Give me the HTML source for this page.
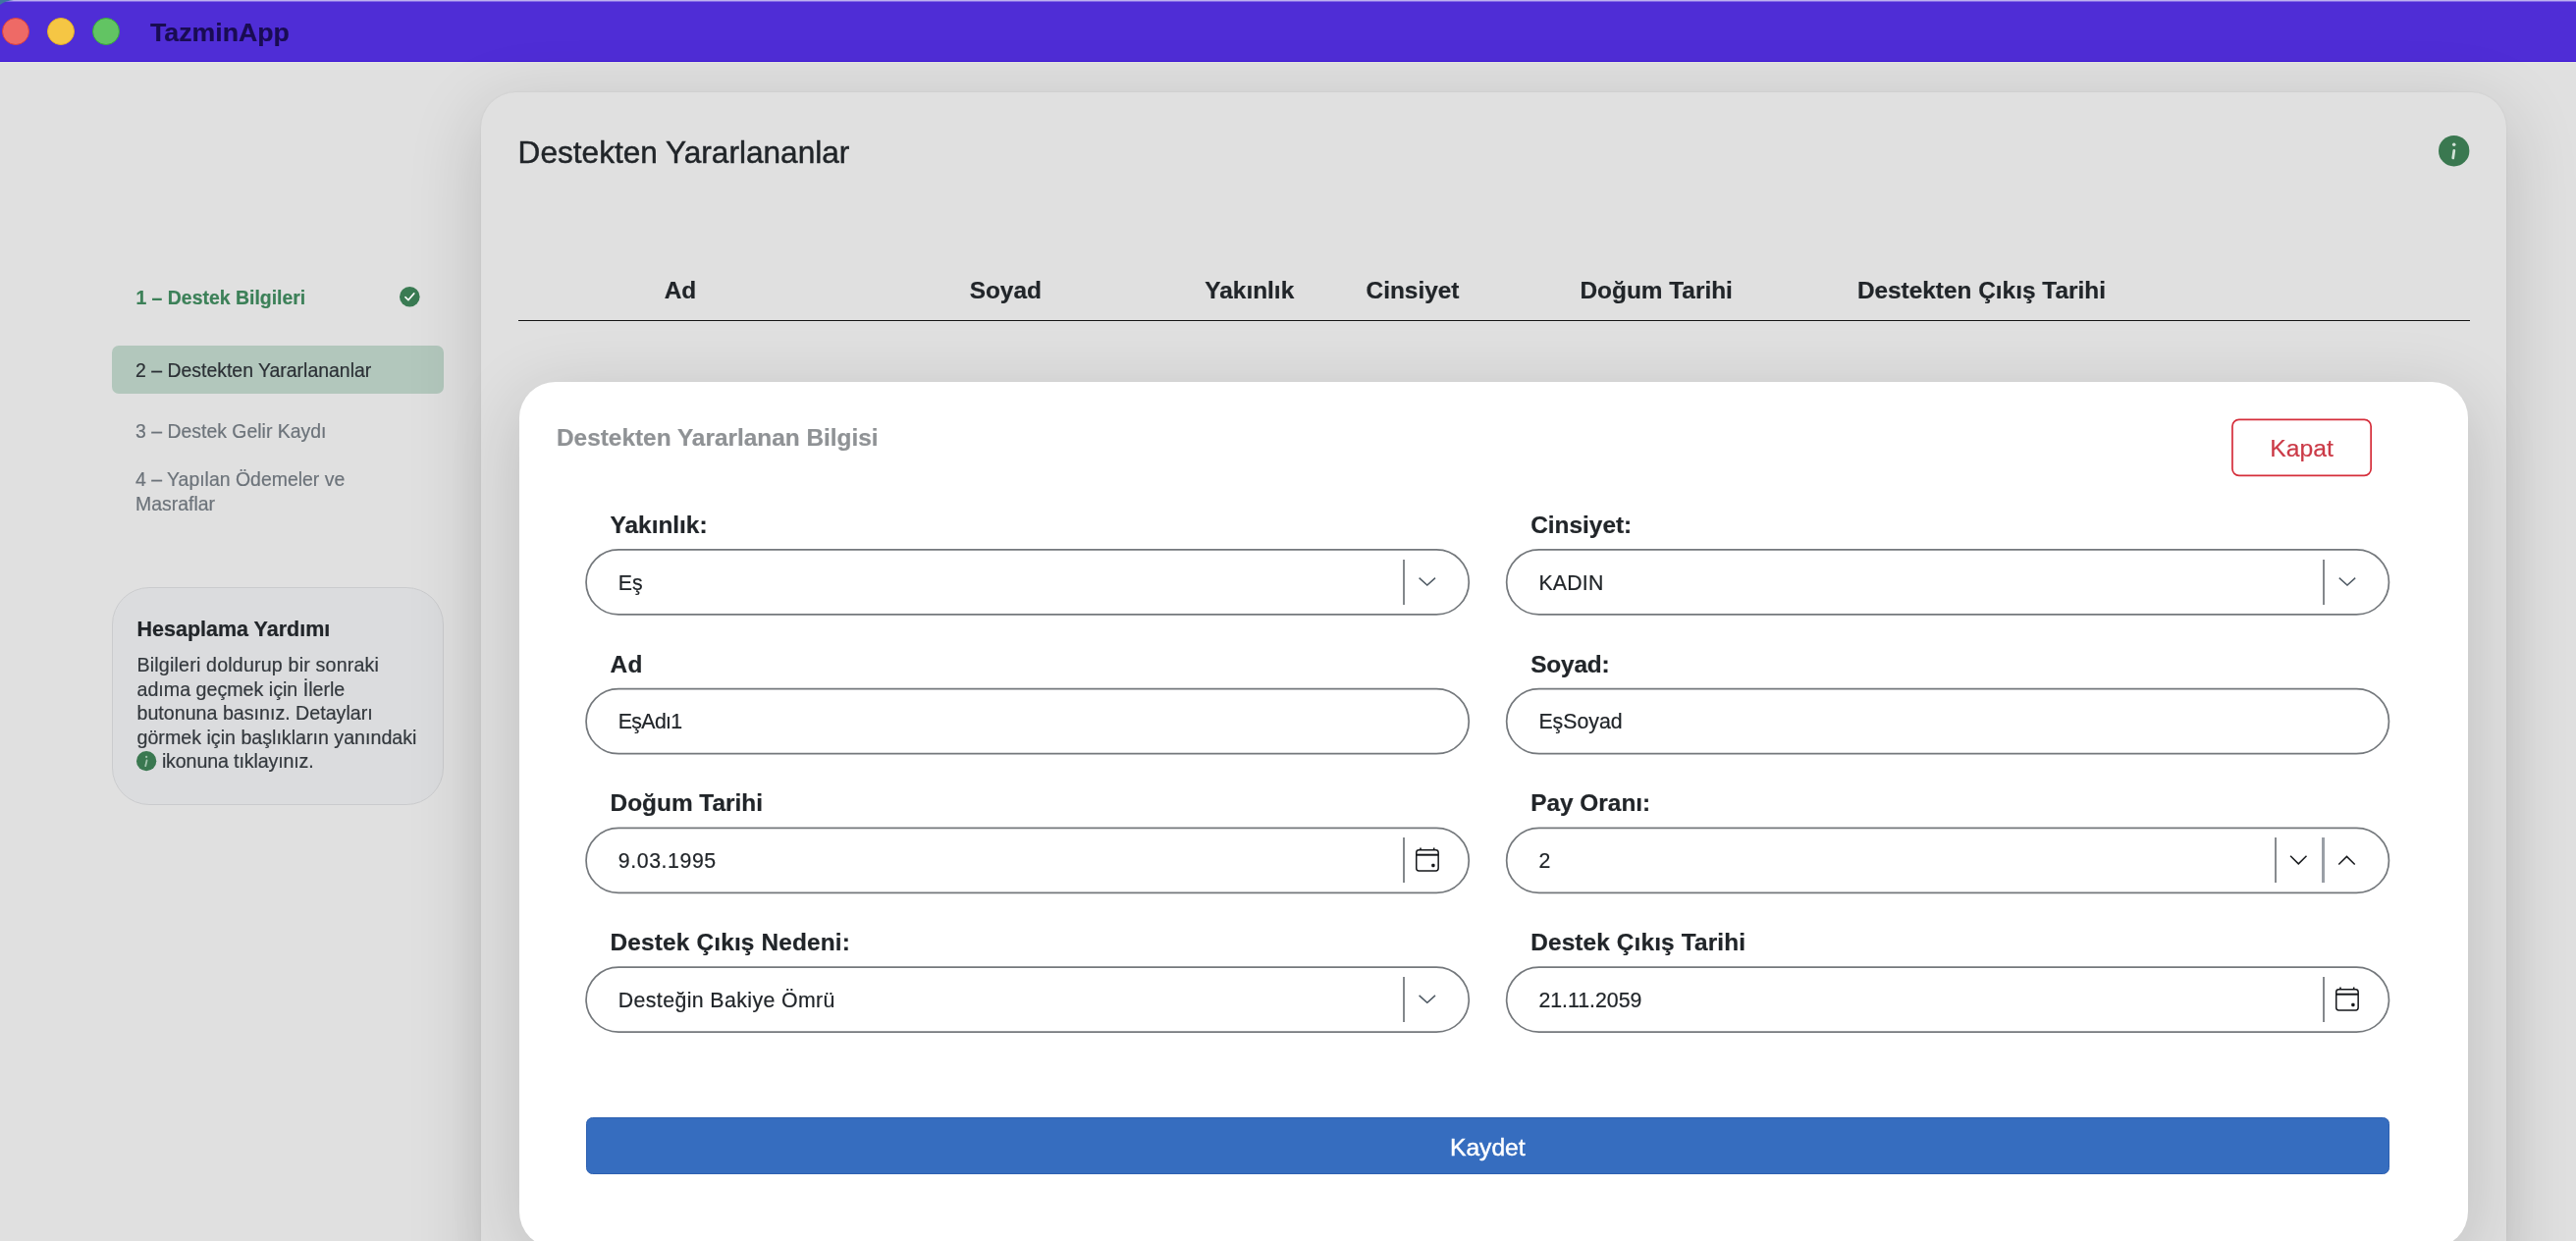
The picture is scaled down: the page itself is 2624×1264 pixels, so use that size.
<!DOCTYPE html>
<html lang="tr"><head><meta charset="utf-8"><title>TazminApp</title>
<style>
html,body{margin:0;padding:0;}
body{width:2624px;height:1264px;overflow:hidden;position:relative;background:#e0e0e0;font-family:"Liberation Sans",sans-serif;}
#root{position:absolute;left:0;top:0;width:2624px;height:1264px;overflow:hidden;will-change:transform;}
.t{position:absolute;white-space:nowrap;line-height:1;-webkit-text-stroke:0.2px currentColor;}
.abs{position:absolute;}
.inp{position:absolute;box-sizing:border-box;border:1.8px solid #777b7f;border-radius:34px;background:#fff;}
.sep{position:absolute;background:#84888c;}
svg{position:absolute;overflow:visible;}
</style></head><body><div id="root">
<div class="abs" style="left:0;top:0;width:2624px;height:63px;background:#4f2dd6;"></div>
<div class="abs" style="left:0;top:0;width:2624px;height:1px;background:#bdb2ee;"></div>
<div class="abs" style="left:0;top:1px;width:2624px;height:1px;background:#8168e6;"></div>
<svg style="left:0;top:0" width="16" height="6" viewBox="0 0 16 6"><path d="M0 0 H14 Q4.5 1 0 5 Z" fill="#3f74a2"/></svg>
<div class="abs" style="left:0;top:61.6px;width:2624px;height:1.4px;background:#3a12d6;"></div>
<div class="abs" style="left:2px;top:18px;width:28px;height:28px;border-radius:50%;box-sizing:border-box;background:#ee6a66;border:1.2px solid #e0403c;"></div>
<div class="abs" style="left:48px;top:18px;width:28px;height:28px;border-radius:50%;box-sizing:border-box;background:#f5c644;border:1.2px solid #e6ad26;"></div>
<div class="abs" style="left:94px;top:18px;width:28px;height:28px;border-radius:50%;box-sizing:border-box;background:#62c463;border:1.2px solid #37ab3a;"></div>
<div class="t" style="left:153px;top:19.70px;font-size:26.7px;font-weight:bold;color:#190c52;">TazminApp</div>
<div class="t" style="left:138.4px;top:294.44px;font-size:19.45px;font-weight:bold;color:#3c8058;">1 – Destek Bilgileri</div>
<svg style="left:407.3px;top:292.4px" width="20.6" height="20.6" viewBox="0 0 20.6 20.6"><circle cx="10.3" cy="10.3" r="10.3" fill="#3a7b53"/><path d="M5.9 10.7 L9.0 13.6 L14.8 6.9" fill="none" stroke="#fff" stroke-width="1.6" stroke-linecap="round" stroke-linejoin="round"/></svg>
<div class="abs" style="left:113.5px;top:352px;width:338.4px;height:48.8px;border-radius:7px;background:#b2c7bc;"></div>
<div class="t" style="left:138.0px;top:368.14px;font-size:19.45px;font-weight:normal;color:#2b3035;">2 – Destekten Yararlananlar</div>
<div class="t" style="left:138.0px;top:429.84px;font-size:19.45px;font-weight:normal;color:#6c737a;">3 – Destek Gelir Kaydı</div>
<div class="t" style="left:138.0px;top:478.84px;font-size:19.45px;font-weight:normal;color:#6c737a;">4 – Yapılan Ödemeler ve</div>
<div class="t" style="left:138.0px;top:503.74px;font-size:19.45px;font-weight:normal;color:#6c737a;">Masraflar</div>
<div class="abs" style="left:113.6px;top:598px;width:338px;height:221.6px;box-sizing:border-box;border-radius:38px;background:#dbdcde;border:1.5px solid #cacbcd;"></div>
<div class="t" style="left:139.5px;top:631.00px;font-size:21.5px;font-weight:bold;color:#212529;">Hesaplama Yardımı</div>
<div class="t" style="left:139.5px;top:668.37px;font-size:19.65px;font-weight:normal;color:#33383d;letter-spacing:0.18px;">Bilgileri doldurup bir sonraki</div>
<div class="t" style="left:139.5px;top:692.83px;font-size:19.65px;font-weight:normal;color:#33383d;">adıma geçmek için İlerle</div>
<div class="t" style="left:139.5px;top:717.29px;font-size:19.65px;font-weight:normal;color:#33383d;">butonuna basınız. Detayları</div>
<div class="t" style="left:139.5px;top:741.75px;font-size:19.65px;font-weight:normal;color:#33383d;">görmek için başlıkların yanındaki</div>
<div class="t" style="left:164.9px;top:766.21px;font-size:19.65px;font-weight:normal;color:#33383d;letter-spacing:-0.13px;">ikonuna tıklayınız.</div>
<svg style="left:139.2px;top:765.05px" width="20.3" height="20.3" viewBox="0 0 20.3 20.3"><circle cx="10.15" cy="10.15" r="10.15" fill="#3a7850"/><circle cx="10.15" cy="5.95" r="1.1" fill="#a3c4ae"/><path d="M10.55 9.5 L9.2 15.2" stroke="#a3c4ae" stroke-width="1.8" stroke-linecap="round" fill="none"/></svg>
<div class="abs" style="left:490px;top:94px;width:2063px;height:1300px;box-sizing:border-box;border-radius:36px;background:#e0e0e0;box-shadow:0 0 3px rgba(0,0,0,0.07),0 18px 76px rgba(0,0,0,0.165);"></div>
<div class="t" style="left:527.6px;top:140.05px;font-size:31.6px;font-weight:normal;color:#212529;-webkit-text-stroke:0.45px currentColor;">Destekten Yararlananlar</div>
<svg style="left:2483.8px;top:137.7px" width="31.4" height="31.4" viewBox="0 0 31.4 31.4"><circle cx="15.7" cy="15.7" r="15.7" fill="#3a7850"/><circle cx="15.75" cy="9.25" r="1.75" fill="#d2e2d7"/><path d="M15.85 15.3 L14.75 23.0" stroke="#d2e2d7" stroke-width="2.7" stroke-linecap="round" fill="none"/></svg>
<div class="t" style="left:-307.00px;width:2000px;text-align:center;top:283.95px;font-size:24.4px;font-weight:bold;color:#212529;">Ad</div>
<div class="t" style="left:24.30px;width:2000px;text-align:center;top:283.95px;font-size:24.4px;font-weight:bold;color:#212529;">Soyad</div>
<div class="t" style="left:272.80px;width:2000px;text-align:center;top:283.95px;font-size:24.4px;font-weight:bold;color:#212529;">Yakınlık</div>
<div class="t" style="left:439.00px;width:2000px;text-align:center;top:283.95px;font-size:24.4px;font-weight:bold;color:#212529;">Cinsiyet</div>
<div class="t" style="left:687.20px;width:2000px;text-align:center;top:283.95px;font-size:24.4px;font-weight:bold;color:#212529;">Doğum Tarihi</div>
<div class="t" style="left:1018.40px;width:2000px;text-align:center;top:283.95px;font-size:24.4px;font-weight:bold;color:#212529;">Destekten Çıkış Tarihi</div>
<div class="abs" style="left:528px;top:325.9px;width:1988px;height:1.4px;background:#161616;"></div>
<div class="abs" style="left:529px;top:389.1px;width:1985.3px;height:881.6px;border-radius:37px;background:#fff;box-shadow:0 16px 72px 0 rgba(0,0,0,0.16);"></div>
<div class="t" style="left:567px;top:434.15px;font-size:24.4px;font-weight:bold;color:#8f9295;">Destekten Yararlanan Bilgisi</div>
<svg style="left:0;top:0" width="1" height="1"><rect x="2273.95" y="427.35" width="141.2" height="57.0" rx="6.8" fill="none" stroke="#d52e3b" stroke-width="1.7"/></svg>
<div class="t" style="left:1344.60px;width:2000px;text-align:center;top:445.39px;font-size:24.7px;font-weight:normal;color:#cb3a47;">Kapat</div>
<div class="t" style="left:621.6px;top:522.95px;font-size:24.4px;font-weight:bold;color:#212529;">Yakınlık:</div>
<svg style="left:0;top:0" width="1" height="1"><rect x="597.05" y="559.85" width="899.20" height="66.10" rx="33.05" fill="#fff" stroke="#74787c" stroke-width="1.7"/></svg>
<div class="t" style="left:629.8000000000001px;top:583.57px;font-size:21.3px;font-weight:normal;color:#212529;">Eş</div>
<div class="sep" style="left:1429.00px;top:569.90px;width:1.8px;height:45.8px;"></div>
<svg style="left:0;top:0" width="1" height="1"><path d="M1445.60 588.60 L1453.80 596.10 L1462.00 588.60" fill="none" stroke="#4f5a64" stroke-width="1.5" stroke-linecap="butt" stroke-linejoin="miter"/></svg>
<div class="t" style="left:1559.2px;top:522.95px;font-size:24.4px;font-weight:bold;color:#212529;">Cinsiyet:</div>
<svg style="left:0;top:0" width="1" height="1"><rect x="1534.65" y="559.85" width="898.80" height="66.10" rx="33.05" fill="#fff" stroke="#74787c" stroke-width="1.7"/></svg>
<div class="t" style="left:1567.3999999999999px;top:583.57px;font-size:21.3px;font-weight:normal;color:#212529;letter-spacing:0.2px;">KADIN</div>
<div class="sep" style="left:2366.20px;top:569.90px;width:1.8px;height:45.8px;"></div>
<svg style="left:0;top:0" width="1" height="1"><path d="M2382.80 588.60 L2391.00 596.10 L2399.20 588.60" fill="none" stroke="#4f5a64" stroke-width="1.5" stroke-linecap="butt" stroke-linejoin="miter"/></svg>
<div class="t" style="left:621.6px;top:664.70px;font-size:24.4px;font-weight:bold;color:#212529;letter-spacing:0.34px;">Ad</div>
<svg style="left:0;top:0" width="1" height="1"><rect x="597.05" y="701.60" width="899.20" height="66.10" rx="33.05" fill="#fff" stroke="#74787c" stroke-width="1.7"/></svg>
<div class="t" style="left:629.8000000000001px;top:725.32px;font-size:21.3px;font-weight:normal;color:#212529;letter-spacing:-0.65px;">EşAdı1</div>
<div class="t" style="left:1559.2px;top:664.70px;font-size:24.4px;font-weight:bold;color:#212529;letter-spacing:-0.16px;">Soyad:</div>
<svg style="left:0;top:0" width="1" height="1"><rect x="1534.65" y="701.60" width="898.80" height="66.10" rx="33.05" fill="#fff" stroke="#74787c" stroke-width="1.7"/></svg>
<div class="t" style="left:1567.3999999999999px;top:725.32px;font-size:21.3px;font-weight:normal;color:#212529;">EşSoyad</div>
<div class="t" style="left:621.6px;top:806.45px;font-size:24.4px;font-weight:bold;color:#212529;">Doğum Tarihi</div>
<svg style="left:0;top:0" width="1" height="1"><rect x="597.05" y="843.35" width="899.20" height="66.10" rx="33.05" fill="#fff" stroke="#74787c" stroke-width="1.7"/></svg>
<div class="t" style="left:629.8000000000001px;top:867.07px;font-size:21.3px;font-weight:normal;color:#212529;letter-spacing:0.58px;">9.03.1995</div>
<div class="sep" style="left:1429.00px;top:853.40px;width:1.8px;height:45.8px;"></div>
<svg style="left:1441.90px;top:863.10px" width="24" height="25" viewBox="0 -2 24 25"><rect x="0.75" y="0.75" width="22.4" height="21.2" rx="2.6" fill="none" stroke="#15171a" stroke-width="1.5"/><path d="M0.75 5.7 H23.15" stroke="#15171a" stroke-width="2"/><path d="M5.0 -1.5 V0.8 M18.7 -1.5 V0.8" stroke="#15171a" stroke-width="1.6"/><rect x="16.2" y="14.8" width="3.4" height="3.4" rx="1.1" fill="#15171a"/></svg>
<div class="t" style="left:1559.2px;top:806.45px;font-size:24.4px;font-weight:bold;color:#212529;">Pay Oranı:</div>
<svg style="left:0;top:0" width="1" height="1"><rect x="1534.65" y="843.35" width="898.80" height="66.10" rx="33.05" fill="#fff" stroke="#74787c" stroke-width="1.7"/></svg>
<div class="t" style="left:1567.3999999999999px;top:867.07px;font-size:21.3px;font-weight:normal;color:#212529;">2</div>
<div class="sep" style="left:2366.20px;top:853.40px;width:1.8px;height:45.8px;"></div>
<div class="sep" style="left:2365.10px;top:853.40px;width:2.8px;height:45.8px;background:#9a9fa6;"></div>
<div class="sep" style="left:2316.85px;top:853.40px;width:1.9px;height:45.8px;background:#888b8f;"></div>
<svg style="left:0;top:0" width="1" height="1"><path d="M2333.10 871.80 L2341.30 879.90 L2349.50 871.80" fill="none" stroke="#17191c" stroke-width="1.5" stroke-linecap="butt" stroke-linejoin="miter"/></svg>
<svg style="left:0;top:0" width="1" height="1"><path d="M2382.30 880.50 L2390.50 872.40 L2398.70 880.50" fill="none" stroke="#17191c" stroke-width="1.5" stroke-linecap="butt" stroke-linejoin="miter"/></svg>
<div class="t" style="left:621.6px;top:948.20px;font-size:24.4px;font-weight:bold;color:#212529;letter-spacing:0.16px;">Destek Çıkış Nedeni:</div>
<svg style="left:0;top:0" width="1" height="1"><rect x="597.05" y="985.10" width="899.20" height="66.10" rx="33.05" fill="#fff" stroke="#74787c" stroke-width="1.7"/></svg>
<div class="t" style="left:629.8000000000001px;top:1008.82px;font-size:21.3px;font-weight:normal;color:#212529;letter-spacing:0.4px;">Desteğin Bakiye Ömrü</div>
<div class="sep" style="left:1429.00px;top:995.15px;width:1.8px;height:45.8px;"></div>
<svg style="left:0;top:0" width="1" height="1"><path d="M1445.60 1013.85 L1453.80 1021.35 L1462.00 1013.85" fill="none" stroke="#4f5a64" stroke-width="1.5" stroke-linecap="butt" stroke-linejoin="miter"/></svg>
<div class="t" style="left:1559.2px;top:948.20px;font-size:24.4px;font-weight:bold;color:#212529;letter-spacing:0.13px;">Destek Çıkış Tarihi</div>
<svg style="left:0;top:0" width="1" height="1"><rect x="1534.65" y="985.10" width="898.80" height="66.10" rx="33.05" fill="#fff" stroke="#74787c" stroke-width="1.7"/></svg>
<div class="t" style="left:1567.3999999999999px;top:1008.82px;font-size:21.3px;font-weight:normal;color:#212529;">21.11.2059</div>
<div class="sep" style="left:2366.20px;top:995.15px;width:1.8px;height:45.8px;"></div>
<svg style="left:2379.10px;top:1004.85px" width="24" height="25" viewBox="0 -2 24 25"><rect x="0.75" y="0.75" width="22.4" height="21.2" rx="2.6" fill="none" stroke="#15171a" stroke-width="1.5"/><path d="M0.75 5.7 H23.15" stroke="#15171a" stroke-width="2"/><path d="M5.0 -1.5 V0.8 M18.7 -1.5 V0.8" stroke="#15171a" stroke-width="1.6"/><rect x="16.2" y="14.8" width="3.4" height="3.4" rx="1.1" fill="#15171a"/></svg>
<div class="abs" style="left:597px;top:1138px;width:1836.8px;height:58.2px;box-sizing:border-box;border-radius:6.5px;background:#366dbf;border:1px solid #2d60b0;"></div>
<div class="t" style="left:515.30px;width:2000px;text-align:center;top:1156.58px;font-size:24.6px;font-weight:normal;color:#ffffff;-webkit-text-stroke:0.45px #fff;">Kaydet</div>
</div></body></html>
